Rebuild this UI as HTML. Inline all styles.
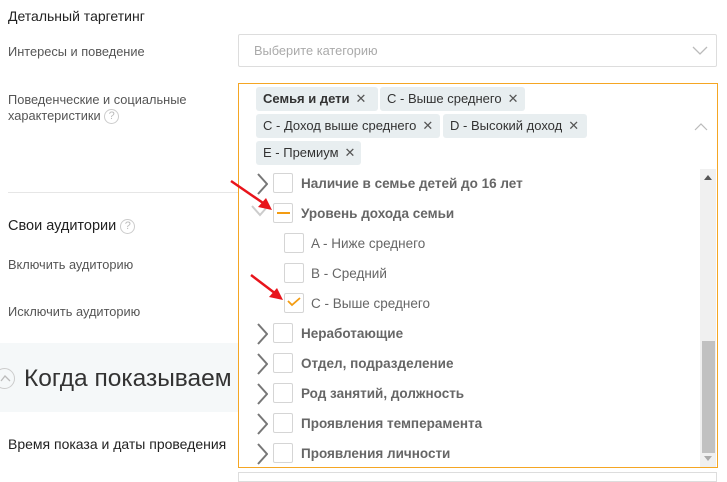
<!DOCTYPE html>
<html><head><meta charset="utf-8"><style>
*{box-sizing:border-box;margin:0;padding:0}
body{width:727px;height:476px;overflow:hidden;background:#fff;font-family:"Liberation Sans","DejaVu Sans",sans-serif;position:relative;color:#333}
.abs{position:absolute;white-space:nowrap}
.lbl{font-size:12.8px;color:#555}
.q{display:inline-block;width:15px;height:15px;border:1px solid #ccc;border-radius:50%;color:#bbb;font-size:11px;text-align:center;line-height:13px;vertical-align:middle}
.tag{position:absolute;white-space:nowrap;overflow:hidden;height:24px;background:#e8eef0;border-radius:3px;font-size:13px;line-height:24px;padding:0 7px;color:#333}
.tag b{font-weight:bold}
.tag span{margin-left:6px;color:#555}
.cb{position:absolute;width:20px;height:20px;border:1px solid #d5d5d5;border-radius:2px;background:#fff}
.it{position:absolute;font-size:13.5px;color:#666}
.it.b{font-weight:bold}
.chev{position:absolute;width:12px;height:22px}
</style></head><body>
<div class="abs" style="left:8px;top:8px;font-size:14px;color:#222">Детальный таргетинг</div>
<div class="abs lbl" style="left:8px;top:44px">Интересы и поведение</div>
<div class="abs" style="left:238px;top:34px;width:479px;height:33px;border:1px solid #ddd;border-radius:2px"></div>
<div class="abs" style="left:254px;top:43px;font-size:12.8px;color:#aaa">Выберите категорию</div>
<svg class="abs" style="left:692px;top:46px" width="16" height="10"><path d="M1 1 L8 8 L15 1" stroke="#bbb" stroke-width="1.3" fill="none"/></svg>
<div class="abs lbl" style="left:8px;top:92px;line-height:16px">Поведенческие и социальные<br>характеристики <span class="q">?</span></div>
<div class="abs" style="left:8px;top:192px;width:232px;height:1px;background:#e6e6e6"></div>
<div class="abs" style="left:8px;top:218px;font-size:14.5px;color:#222">Свои аудитории <span class="q">?</span></div>
<div class="abs lbl" style="left:8px;top:257px">Включить аудиторию</div>
<div class="abs lbl" style="left:8px;top:304px">Исключить аудиторию</div>
<div class="abs" style="left:0;top:343px;width:240px;height:69px;background:#f5f8f9"></div>
<div class="abs" style="left:-6px;top:368px;width:21px;height:21px;border:1px solid #ccc;border-radius:50%"></div>
<svg class="abs" style="left:0;top:374px" width="12" height="8"><path d="M1 7 L5 2 L10 7" stroke="#bbb" stroke-width="1.3" fill="none"/></svg>
<div class="abs" style="left:24px;top:365px;font-size:24.5px;color:#333">Когда показываем</div>
<div class="abs" style="left:8px;top:436px;font-size:14px;color:#222">Время показа и даты проведения</div>
<div class="abs" style="left:238px;top:472px;width:479px;height:10px;border:1px solid #ddd"></div>

<div class="abs" style="left:238px;top:83px;width:480px;height:385px;border:1px solid #f5a623;background:#fff"></div>
<div class="tag" style="left:256px;top:87px;width:122px"><b>Семья и дети</b><span>✕</span></div>
<div class="tag" style="left:380px;top:87px;width:145px">C - Выше среднего<span>✕</span></div>
<div class="tag" style="left:256px;top:114px;width:184px">C - Доход выше среднего<span>✕</span></div>
<div class="tag" style="left:443px;top:114px;width:144px">D - Высокий доход<span>✕</span></div>
<div class="tag" style="left:256px;top:141px;width:105px">E - Премиум<span>✕</span></div>
<svg class="abs" style="left:694px;top:122px" width="14" height="9"><path d="M1 8 L7 2 L13 8" stroke="#bbb" stroke-width="1.2" fill="none"/></svg>

<div class="abs" style="left:700px;top:169px;width:16px;height:298px;background:#f0f0f0"></div>
<div class="abs" style="left:702px;top:341px;width:13px;height:112px;background:#c1c1c1"></div>
<svg class="abs" style="left:704px;top:175px" width="8" height="5"><path d="M0 5 L4 0 L8 5Z" fill="#555"/></svg>
<svg class="abs" style="left:704px;top:456px" width="8" height="5"><path d="M0 0 L4 5 L8 0Z" fill="#aaa"/></svg>

<svg class="chev" style="left:256px;top:173px"><path d="M2 1 L11 11 L2 21" stroke="#777" stroke-width="2" fill="none"/></svg>
<div class="cb" style="left:273px;top:173px"></div><div class="it b" style="left:301px;top:176px">Наличие в семье детей до 16 лет</div>
<svg class="chev" style="left:251px;top:205px;width:22px;height:12px"><path d="M1 1 L9 10 L17 1" stroke="#ccc" stroke-width="2" fill="none"/></svg>
<div class="cb" style="left:273px;top:203px"></div><div class="abs" style="left:277px;top:212px;width:13px;height:2px;background:#f39c12"></div>
<div class="it b" style="left:301px;top:206px">Уровень дохода семьи</div>
<div class="cb" style="left:284px;top:233px"></div><div class="it" style="left:311px;top:236px">A - Ниже среднего</div>
<div class="cb" style="left:284px;top:263px"></div><div class="it" style="left:311px;top:266px">B - Средний</div>
<div class="cb" style="left:284px;top:293px"></div>
<svg class="abs" style="left:287px;top:297px" width="14" height="10"><path d="M1 4 L5 8 L13 1" stroke="#f39c12" stroke-width="1.8" fill="none"/></svg>
<div class="it" style="left:311px;top:296px">C - Выше среднего</div>
<svg class="chev" style="left:256px;top:323px"><path d="M2 1 L11 11 L2 21" stroke="#777" stroke-width="2" fill="none"/></svg>
<div class="cb" style="left:273px;top:323px"></div><div class="it b" style="left:301px;top:326px">Неработающие</div>
<svg class="chev" style="left:256px;top:353px"><path d="M2 1 L11 11 L2 21" stroke="#777" stroke-width="2" fill="none"/></svg>
<div class="cb" style="left:273px;top:353px"></div><div class="it b" style="left:301px;top:356px">Отдел, подразделение</div>
<svg class="chev" style="left:256px;top:383px"><path d="M2 1 L11 11 L2 21" stroke="#777" stroke-width="2" fill="none"/></svg>
<div class="cb" style="left:273px;top:383px"></div><div class="it b" style="left:301px;top:386px">Род занятий, должность</div>
<svg class="chev" style="left:256px;top:413px"><path d="M2 1 L11 11 L2 21" stroke="#777" stroke-width="2" fill="none"/></svg>
<div class="cb" style="left:273px;top:413px"></div><div class="it b" style="left:301px;top:416px">Проявления темперамента</div>
<svg class="chev" style="left:256px;top:443px"><path d="M2 1 L11 11 L2 21" stroke="#777" stroke-width="2" fill="none"/></svg>
<div class="cb" style="left:273px;top:443px"></div><div class="it b" style="left:301px;top:446px">Проявления личности</div>

<svg class="abs" style="left:228px;top:178px" width="50" height="40"><path d="M3 3 L38 27" stroke="#e8141b" stroke-width="2.5"/><path d="M44 32 L30 29 L38 20Z" fill="#e8141b"/></svg>
<svg class="abs" style="left:248px;top:272px" width="40" height="40"><path d="M3 3 L28 22" stroke="#e8141b" stroke-width="2.5"/><path d="M35 28 L21 25 L29 16Z" fill="#e8141b"/></svg>
</body></html>
